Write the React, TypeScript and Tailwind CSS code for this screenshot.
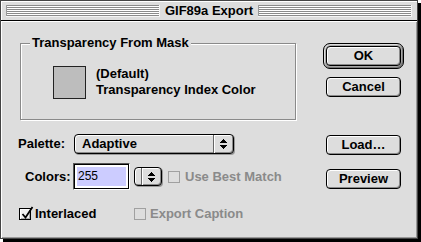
import React from 'react';

const stripes =
  'h-[12px] flex-1 bg-[repeating-linear-gradient(to_bottom,#8a8a8a_0px,#8a8a8a_1px,#ffffff_1px,#ffffff_2px)] border-b border-r border-[#f4f4f4] shadow-[inset_1px_0_0_#999]';

const UpDown: React.FC = () => (
  <svg width="7" height="10" viewBox="0 0 7 10" shapeRendering="crispEdges">
    <rect x="3" y="0" width="1" height="1" fill="#000" />
    <rect x="2" y="1" width="3" height="1" fill="#000" />
    <rect x="1" y="2" width="5" height="1" fill="#000" />
    <rect x="0" y="3" width="7" height="1" fill="#000" />
    <rect x="0" y="6" width="7" height="1" fill="#000" />
    <rect x="1" y="7" width="5" height="1" fill="#000" />
    <rect x="2" y="8" width="3" height="1" fill="#000" />
    <rect x="3" y="9" width="1" height="1" fill="#000" />
  </svg>
);

const MacButton: React.FC<{ label: string; className?: string }> = ({ label, className = '' }) => (
  <button
    className={`h-[20px] w-[75px] rounded-[4px] border border-black bg-[#dddddd] shadow-[inset_1px_1px_0_#ffffff,inset_-1px_-1px_0_#8a8a8a] flex items-center justify-center text-[13px] font-bold leading-[16px] text-black ${className}`}
  >
    {label}
  </button>
);

const CheckBox: React.FC<{ checked?: boolean; disabled?: boolean }> = ({ checked, disabled }) => (
  <span
    className={`relative block w-[12px] h-[12px] shrink-0 border ${
      disabled
        ? 'border-[#a0a0a0] bg-[#dddddd]'
        : 'border-black bg-[#eeeeee] shadow-[inset_1px_1px_0_#ffffff,inset_-1px_-1px_0_#aaaaaa]'
    }`}
  >
    {checked && (
      <svg className="absolute left-[1px] -top-[3px]" width="13" height="13" viewBox="0 0 13 13">
        <path d="M1.5 8 L4.5 11.5 L11.5 1" stroke="#000" strokeWidth="1.8" fill="none" />
      </svg>
    )}
  </span>
);

export default function App() {
  return (
    <div className="w-[421px] h-[242px] bg-white font-['Liberation_Sans',Arial,sans-serif] text-black">
      <div className="w-[418px] h-[239px] border border-[#444444] bg-[#dddddd] shadow-[3px_3px_0_#000000] flex flex-col">
        {/* title bar */}
        <div className="h-[20px] shrink-0 flex items-center border-b border-black px-[5px] bg-[#dddddd] shadow-[inset_1px_1px_0_#ffffff]">
          <div className={stripes} />
          <div className="px-[5px] text-[13px] font-bold leading-[16px]">GIF89a Export</div>
          <div className={stripes} />
        </div>

        {/* body */}
        <div className="flex-1 flex shadow-[inset_1px_1px_0_#ffffff,inset_-1px_-1px_0_#999999]">
          {/* left column */}
          <div className="w-[305px] pl-[17px] flex flex-col">
            <div className="relative mt-[22px] ml-[2px] w-[276px] h-[77px] border border-[#8a8a8a] shadow-[1px_1px_0_#ffffff,inset_1px_1px_0_#ffffff]">
              <span className="absolute -top-[9px] left-[9px] px-[2px] bg-[#dddddd] text-[13px] font-bold leading-[15px]">
                Transparency From Mask
              </span>
              <div className="flex pl-[32px] pt-[22px]">
                <div className="w-[33px] h-[33px] border border-[#222222] bg-[#bdbdbd]" />
                <div className="ml-[10px] text-[13px] font-bold leading-[16px]">
                  <div>(Default)</div>
                  <div>Transparency Index Color</div>
                </div>
              </div>
            </div>

            {/* palette */}
            <div className="mt-[14px] flex items-center h-[20px]">
              <span className="w-[56px] text-[13px] font-bold leading-[16px]">Palette:</span>
              <div className="w-[160px] h-[20px] rounded-[4px] border border-black bg-[#dddddd] shadow-[inset_1px_1px_0_#ffffff,inset_-1px_-1px_0_#8a8a8a,1px_1px_0_#999999] flex">
                <span className="flex-1 pl-[7px] text-[13px] font-bold leading-[18px]">Adaptive</span>
                <span className="w-[20px] border-l border-[#666666] shadow-[inset_1px_0_0_#ffffff] flex items-center justify-center">
                  <UpDown />
                </span>
              </div>
            </div>

            {/* colors */}
            <div className="mt-[9px] flex items-center h-[27px]">
              <span className="w-[55px] pl-[7px] text-[13px] font-bold leading-[16px]">Colors:</span>
              <div className="w-[57px] h-[27px] border border-t-[#555555] border-l-[#555555] border-b-white border-r-white">
                <div className="h-full border border-black bg-white p-[2px]">
                  <div className="h-full bg-[#ccccff] pl-[1px] text-[12px] leading-[19px]">255</div>
                </div>
              </div>
              <div className="ml-[4px] w-[28px] h-[19px] rounded-[4px] border border-black bg-[#dddddd] shadow-[inset_1px_1px_0_#ffffff,inset_-1px_-1px_0_#8a8a8a,1px_1px_0_#999999] flex">
                <span className="w-[6px]" />
                <span className="flex-1 border-l border-[#666666] shadow-[inset_1px_0_0_#ffffff] flex items-center justify-center">
                  <UpDown />
                </span>
              </div>
              <span className="ml-[6px]">
                <CheckBox disabled />
              </span>
              <span className="ml-[5px] text-[13px] font-bold leading-[16px] text-[#8a8a8a]">Use Best Match</span>
            </div>

            {/* checkboxes */}
            <div className="mt-[16px] flex items-center h-[16px]">
              <div className="w-[116px] pl-[1px] flex items-center">
                <CheckBox checked />
                <span className="ml-[4px] text-[13px] font-bold leading-[16px]">Interlaced</span>
              </div>
              <CheckBox disabled />
              <span className="ml-[4px] text-[13px] font-bold leading-[16px] text-[#8a8a8a]">Export Caption</span>
            </div>
          </div>

          {/* right column */}
          <div className="pl-[17px] flex flex-col">
            <div className="mt-[22px] w-[81px] h-[26px] rounded-[7px] border border-black bg-[#a8a8a8] shadow-[inset_1px_1px_0_#dddddd,inset_-1px_-1px_0_#777777] p-[2px]">
              <MacButton label="OK" className="w-full h-full" />
            </div>
            <MacButton label="Cancel" className="mt-[8px] ml-[3px]" />
            <MacButton label="Load…" className="mt-[38px] ml-[3px]" />
            <MacButton label="Preview" className="mt-[14px] ml-[3px]" />
          </div>
        </div>
      </div>
    </div>
  );
}
